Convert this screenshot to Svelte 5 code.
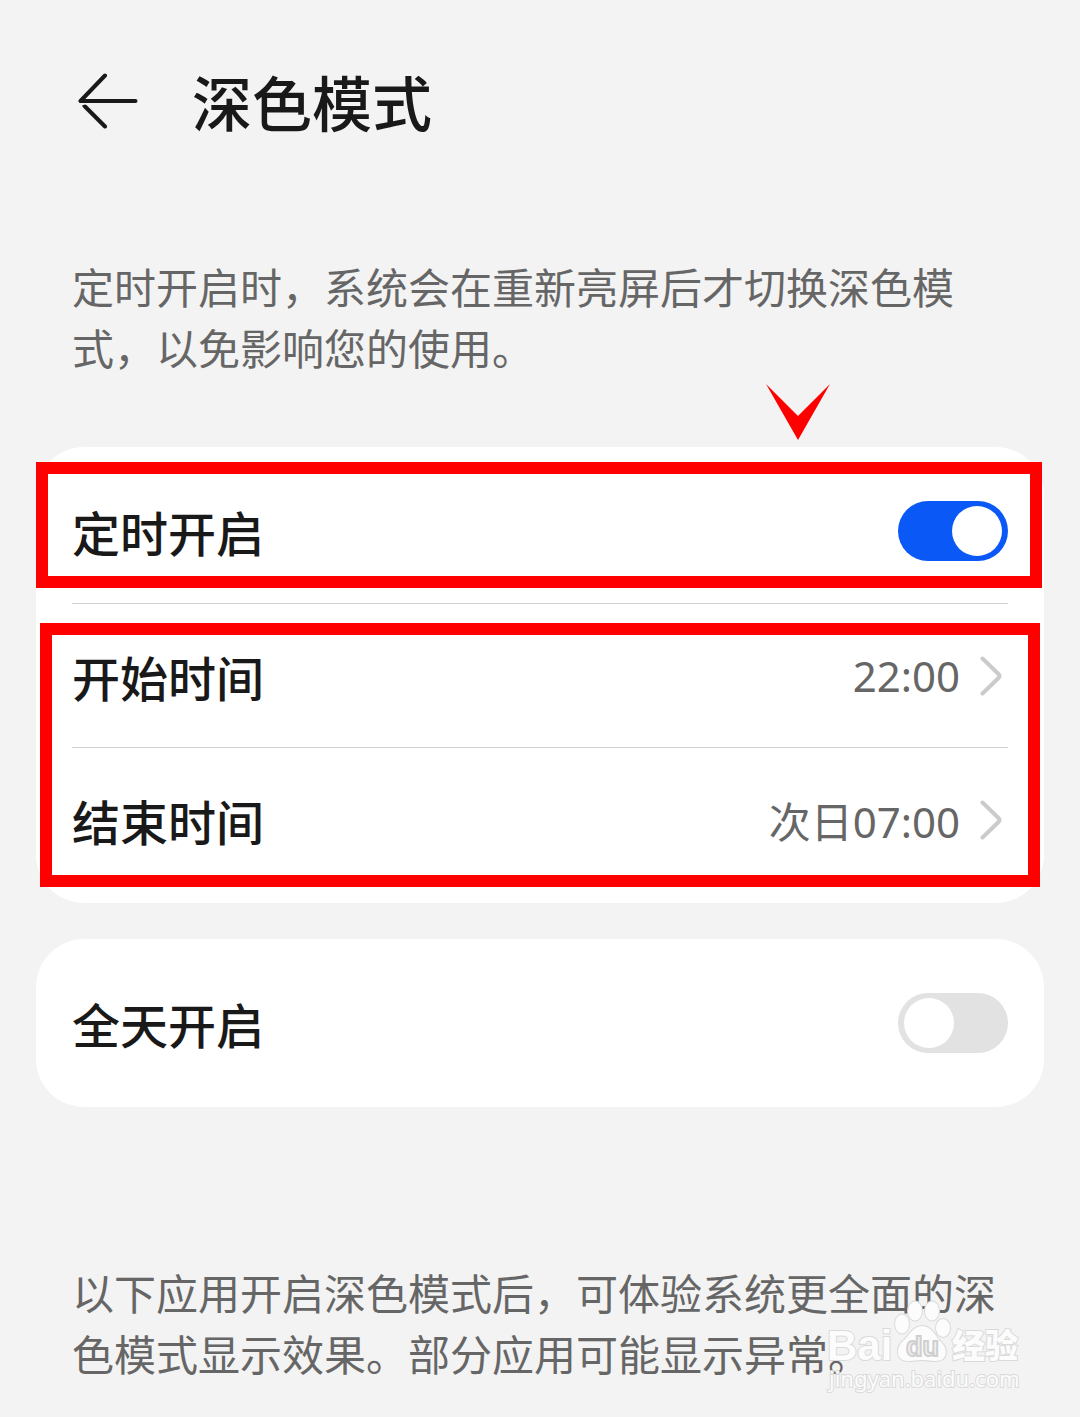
<script lang="ts">
let scheduled = true;
let allDay = false;

const times = [
  { label: '开始时间', value: '22:00' },
  { label: '结束时间', value: '次日07:00' }
];
</script>

<main class="page">
  <header class="header">
    <button class="back" aria-label="返回">
      <svg width="60" height="56" viewBox="0 0 60 56" fill="none" stroke="#191919" stroke-width="4" stroke-linecap="round">
        <path d="M27 2.5 L2.5 28 H57.5" stroke-linejoin="round" />
        <path d="M27 53.5 L7 33.5" />
        <path d="M4.5 33 H8" stroke-width="2" stroke-linecap="butt" />
      </svg>
    </button>
    <h1>深色模式</h1>
  </header>

  <p class="note intro">定时开启时，系统会在重新亮屏后才切换深色模式，以免影响您的使用。</p>

  <section class="card">
    <div class="row">
      <label for="scheduled">定时开启</label>
      <input id="scheduled" class="switch" type="checkbox" bind:checked={scheduled} />
    </div>
    {#each times as time}
      <button class="row">
        <span>{time.label}</span>
        <span class="value">
          {time.value}
          <svg width="22" height="40" viewBox="0 0 22 40" fill="none" stroke="#cbcbcb" stroke-width="4" stroke-linecap="round" stroke-linejoin="round">
            <path d="M2.5 2.5 L18.5 18 Q20.5 20 18.5 22 L2.5 37.5" />
          </svg>
        </span>
      </button>
    {/each}

    <!-- red marks over the card -->
    <svg class="pointer" width="64" height="56" viewBox="0 0 64 56">
      <path d="M0 0 L32 32 L64 0 L32 56 Z" fill="#fe0000" />
    </svg>
    <div class="mark mark-switch"></div>
    <div class="mark mark-times"></div>
  </section>

  <section class="card">
    <div class="row">
      <label for="all-day">全天开启</label>
      <input id="all-day" class="switch" type="checkbox" bind:checked={allDay} />
    </div>
  </section>

  <p class="note apps">以下应用开启深色模式后，可体验系统更全面的深色模式显示效果。部分应用可能显示异常。</p>

  <svg class="watermark" width="200" height="96" viewBox="0 0 200 96">
    <g fill="#fcfcfc" stroke="#dadada" stroke-width="2" paint-order="stroke">
      <text x="1" y="58" class="brand">Bai</text>
      <ellipse cx="76" cy="22" rx="7" ry="9.5" />
      <ellipse cx="89" cy="9" rx="7" ry="9.5" />
      <ellipse cx="106" cy="9" rx="7" ry="9.5" />
      <ellipse cx="117" cy="26" rx="7" ry="9" />
      <path d="M96 24 C106 24 109 34 115 40 C123 48 121 59 110 59 C104 59 101 58 96 58 C91 58 88 59 82 59 C71 59 69 48 76 40 C83 34 87 24 96 24 Z" />
      <text x="126" y="56" class="jingyan">经验</text>
      <text x="3" y="85" class="url">jingyan.baidu.com</text>
    </g>
    <text x="80" y="54" class="du">du</text>
  </svg>
</main>

<style>
  :global(body) {
    margin: 0;
    background: #f3f3f3;
  }

  .page {
    position: relative;
    box-sizing: border-box;
    padding: 68px 36px 31px;
    color: #191919;
    font-family: "Noto Sans", "Noto Sans CJK SC", sans-serif;
  }

  .header {
    display: flex;
    align-items: center;
    gap: 54px;
    height: 72px;
    padding: 0 42px;
  }

  .back {
    display: flex;
    padding: 0 0 6px;
    border: 0;
    background: none;
  }

  h1 {
    margin: 0;
    font-size: 60px;
    font-weight: 500;
    line-height: 72px;
  }

  .note {
    margin: 0;
    padding: 0 36px;
    color: #666;
    font-size: 42px;
    line-height: 61px;
  }

  .intro {
    margin-top: 117px;
    margin-bottom: 68px;
  }

  .apps {
    margin-top: 156px;
  }

  .card {
    position: relative;
    padding: 12px 36px;
    border-radius: 48px;
    background: #fff;
  }

  .card + .card {
    margin-top: 36px;
  }

  .row {
    display: flex;
    align-items: center;
    justify-content: space-between;
    box-sizing: border-box;
    width: 100%;
    height: 144px;
    padding: 0;
    border: 0;
    background: none;
    color: inherit;
    font-family: inherit;
    font-size: 48px;
    font-weight: 500;
  }

  .row + .row {
    border-top: 1px solid #cfcfcf;
  }

  .value {
    display: flex;
    align-items: center;
    gap: 20px;
    padding-right: 6px;
    color: #666;
    font-size: 42px;
    font-weight: 400;
  }

  .switch {
    appearance: none;
    box-sizing: border-box;
    display: flex;
    align-items: center;
    width: 110px;
    height: 60px;
    margin: 0;
    padding: 0 6px;
    border-radius: 30px;
    background: #e2e2e2;
  }

  .switch::before {
    content: "";
    width: 50px;
    height: 50px;
    border-radius: 50%;
    background: #fff;
  }

  .switch:checked {
    justify-content: flex-end;
    background: #0a59f7;
  }

  .mark {
    position: absolute;
    box-sizing: border-box;
    border: 12px solid #fe0000;
    pointer-events: none;
  }

  .mark-switch {
    top: 15px;
    left: 0;
    right: 2px;
    height: 126px;
  }

  .mark-times {
    top: 176px;
    left: 4px;
    right: 4px;
    height: 264px;
  }

  .pointer {
    position: absolute;
    top: -63px;
    right: 214px;
  }

  .watermark {
    position: absolute;
    right: 54px;
    bottom: 18px;
    overflow: visible;
    pointer-events: none;
  }

  .brand {
    font: bold 42px "Liberation Sans", sans-serif;
  }

  .jingyan {
    font: 900 33px "Noto Sans CJK SC", sans-serif;
  }

  .url {
    font: 22px "Noto Sans", sans-serif;
  }

  .du {
    fill: #f3f3f3;
    stroke: #cfcfcf;
    stroke-width: 2px;
    font: bold 27px "Liberation Sans", sans-serif;
  }
</style>
